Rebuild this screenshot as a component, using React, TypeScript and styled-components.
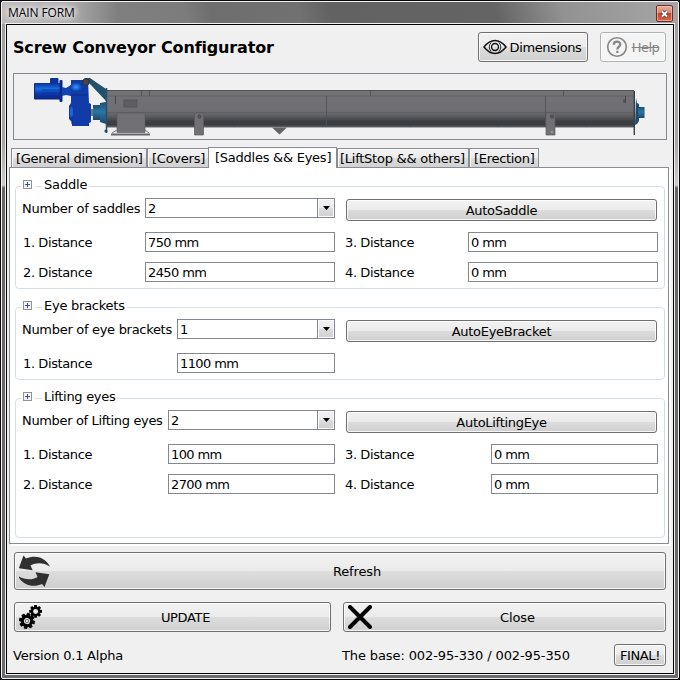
import React from 'react';
import styled, { createGlobalStyle, css } from 'styled-components';

const Global = createGlobalStyle`
  * { box-sizing: border-box; }
  html, body { margin: 0; padding: 0; }
  body {
    font-family: Verdana, "DejaVu Sans", sans-serif;
    font-size: 13px;
    line-height: 16px;
    color: #000;
    overflow: hidden;
  }
`;

const WindowEdge = styled.div`
  width: 680px;
  height: 680px;
  padding: 1px;
  background: #0a080a;
`;

const WindowFrame = styled.div`
  width: 678px;
  height: 678px;
  padding: 0 4px 4px;
  border: 1px solid #f4f2f3;
  border-radius: 2px;
  display: flex;
  flex-direction: column;
  background:
    linear-gradient(90deg, #bdbbbc 0, #b0aeaf 65px, rgba(140, 140, 140, 0) 115px) 0 0 / 100% 22px no-repeat,
    linear-gradient(75deg, #858585 0, #7c7c7c 180px, #6e6e6e 205px, #717171 290px, #626262 320px, #646464 480px, #929292 545px, #a6a6a6 100%) 0 0 / 100% 22px no-repeat,
    linear-gradient(180deg, #a09e9f 0, #a8a4a4 140px, #cfcaca 183px, #676566 186px, #6b6b6b 100%);
`;

const TitleBar = styled.div`
  height: 22px;
  flex: none;
  display: flex;
  justify-content: space-between;
  align-items: flex-start;
  padding: 0 1px 0 2px;
`;

const Caption = styled.span`
  font: 12px/21px "Open Sans", "Noto Sans", sans-serif;
  letter-spacing: -0.1px;
  text-shadow: 0 0 5px #fff, 0 0 7px #fff, 0 0 9px #eee;
`;

const CloseBox = styled.button`
  width: 17px;
  height: 17px;
  margin-top: 3px;
  padding: 0;
  display: flex;
  align-items: center;
  justify-content: center;
  border: 1px solid #6b2f28;
  border-radius: 2px;
  background: linear-gradient(#e9aa9a 0, #dd8673 45%, #c4452b 50%, #d9664a 100%);
  box-shadow: inset 0 0 0 1px rgba(255, 205, 190, 0.55);
`;

const Client = styled.main`
  flex: 1;
  display: flex;
  flex-direction: column;
  border: 1px solid #000;
  outline: 1px solid #f2f2f2;
  background: #f0f0f0;
  padding: 7px 6px 0;
`;

const Header = styled.header`
  height: 30px;
  display: flex;
  gap: 12px;
  padding-right: 1px;
`;

const Heading = styled.h1`
  flex: 1;
  margin: 0;
  font: bold 16px/31px Verdana, "DejaVu Sans", sans-serif;
  letter-spacing: -0.16px;
`;

const Push = styled.button<{ $w?: number; $h: number; $disabled?: boolean; $pad?: number; $ls?: number }>`
  ${p => (p.$w ? css`width: ${p.$w}px; flex: none;` : css`flex: 1;`)}
  height: ${p => p.$h}px;
  display: flex;
  align-items: center;
  padding: 0 ${p => p.$pad ?? 4}px;
  font: inherit;
  letter-spacing: ${p => p.$ls ?? -0.3}px;
  color: #000;
  white-space: nowrap;
  border: 1px solid #707070;
  border-radius: 3px;
  background: linear-gradient(#f2f2f2 0, #ebebeb 49%, #dddddd 50%, #cfcfcf 100%);
  box-shadow: inset 0 0 0 1px rgba(255, 255, 255, 0.8);
  ${p => p.$disabled && css`
    color: #838383;
    border-color: #adb2b5;
    background: #f4f4f4;
    text-decoration: line-through;
  `}
`;

const PushText = styled.span<{ $shift?: number }>`
  flex: 1;
  text-align: center;
  padding-top: 2px;
  padding-left: ${p => p.$shift ?? 0}px;
`;

const Glyph = styled.svg`
  display: block;
  flex: none;
`;

const Preview = styled.div`
  height: 67px;
  margin-top: 11px;
  border: 1px solid #828790;
`;

const TabStrip = styled.div`
  height: 20px;
  margin: 8px 0 -1px -3px;
  padding-left: 1px;
  display: flex;
  align-items: flex-end;
`;

const Tab = styled.div<{ $w: number; $active?: boolean; $ls?: number; $pad?: number }>`
  width: ${p => p.$w}px;
  flex: none;
  height: 20px;
  border: 1px solid #898c95;
  border-bottom: 0;
  padding-left: ${p => p.$pad ?? 4}px;
  line-height: 20px;
  white-space: nowrap;
  letter-spacing: ${p => p.$ls ?? -0.25}px;
  background: linear-gradient(#f2f2f2 0, #ebebeb 49%, #dddddd 50%, #d0d0d0 100%);
  box-shadow: inset 1px 1px 0 #fbfbfb;
  ${p => p.$active && css`
    height: 21px;
    margin-left: -1px;
    background: #fff;
    position: relative;
    z-index: 1;
  `}
`;

const TabPage = styled.section`
  width: 660px;
  height: 377px;
  margin-left: -4px;
  padding: 18px 3px 0 5px;
  border: 1px solid #898c95;
  background: #fff;
  box-shadow: 2px 2px 0 #fdfdfd;
`;

const Group = styled.section<{ $h: number }>`
  position: relative;
  height: ${p => p.$h}px;
  margin-bottom: 18px;
  padding: 11px 6px 0;
  border: 1px solid #d5dfe5;
  border-radius: 4px;
  display: grid;
  grid-template-columns: 313px 313px;
  column-gap: 10px;
  align-items: start;
  align-content: start;
`;

const Legend = styled.div`
  position: absolute;
  top: -10px;
  left: 5px;
  height: 16px;
  display: flex;
  align-items: center;
  background: #fff;
  padding: 0 2px;
`;

const Expander = styled.svg`
  display: block;
  margin: 0 2px 1px 0;
`;

const LegendDash = styled.span`
  width: 7px;
  height: 1px;
  margin: 3px 2px 0 1px;
  background: #d5dfe5;
`;

const LegendText = styled.span<{ $ls: number }>`
  letter-spacing: ${p => p.$ls}px;
`;

const Side = styled.div`
  display: flex;
  flex-direction: column;
  gap: 10px;
`;

const Row = styled.div<{ $first?: boolean }>`
  height: 20px;
  display: flex;
  align-items: center;
  margin-bottom: ${p => (p.$first ? 4 : 0)}px;
`;

const ActionRow = styled.div`
  height: 24px;
  padding: 1px 1px 0;
  display: flex;
`;

const Label = styled.label<{ $w: number; $ls?: number; $indent?: number }>`
  width: ${p => p.$w}px;
  flex: none;
  padding-top: 2px;
  padding-left: ${p => p.$indent ?? 0}px;
  letter-spacing: ${p => p.$ls ?? -0.4}px;
  white-space: nowrap;
`;

const Field = styled.div`
  flex: 1;
  height: 20px;
  padding-left: 2px;
  border: 1px solid #828790;
  background: #fff;
  line-height: 19px;
  letter-spacing: -0.6px;
  display: flex;
  justify-content: space-between;
`;

const DropButton = styled.span`
  width: 17px;
  border-left: 1px solid #828790;
  background: linear-gradient(#f2f2f2 0, #ebebeb 49%, #dddddd 50%, #cfcfcf 100%);
  box-shadow: inset 0 0 0 1px #fafafa;
  display: flex;
  align-items: center;
  justify-content: center;
`;

const Actions = styled.div<{ $top: number }>`
  display: flex;
  gap: 12px;
  margin: ${p => p.$top}px 1px 0;
`;

const Footer = styled.footer`
  display: flex;
  align-items: center;
  margin: 12px 1px 0 0;
`;

const Version = styled.span`
  width: 329px;
  padding-top: 2px;
  letter-spacing: -0.22px;
`;

const Base = styled.span`
  flex: 1;
  padding-top: 2px;
  letter-spacing: -0.11px;
`;

const Conveyor = () => (
  <Glyph width="652" height="65" viewBox="14 74 652 65">
    <defs>
      <linearGradient id="trough" x1="0" y1="0" x2="0" y2="1">
        <stop offset="0" stopColor="#727277" />
        <stop offset=".55" stopColor="#6e6e73" />
        <stop offset=".68" stopColor="#606165" />
        <stop offset=".84" stopColor="#3d3e42" />
        <stop offset=".93" stopColor="#3b3c40" />
        <stop offset="1" stopColor="#68686e" />
      </linearGradient>
      <linearGradient id="motor" x1="0" y1="0" x2="0" y2="1">
        <stop offset="0" stopColor="#0c2f9c" />
        <stop offset=".35" stopColor="#1670dc" />
        <stop offset=".6" stopColor="#0f3eb4" />
        <stop offset="1" stopColor="#0a2280" />
      </linearGradient>
      <linearGradient id="steel" x1="0" y1="0" x2="0" y2="1">
        <stop offset="0" stopColor="#1d4e70" />
        <stop offset=".45" stopColor="#2c75a8" />
        <stop offset="1" stopColor="#1c4766" />
      </linearGradient>
      <radialGradient id="shine">
        <stop offset="0" stopColor="#2e9dff" />
        <stop offset="1" stopColor="#103ba8" />
      </radialGradient>
    </defs>
    <rect x="50" y="78" width="8.5" height="6" rx="1" fill="#103298" />
    <rect x="34" y="83" width="27" height="16.5" rx="1" fill="url(#motor)" />
    <path d="M34.5 84v15" stroke="#0c267b" />
    <path d="M42 90h17M42 93h17M42 96h17" stroke="#0b2b91" strokeWidth=".7" />
    <rect x="59.5" y="80" width="3" height="22" rx="1" fill="#0c2986" />
    <path d="M62 87l4 1 5-3v11l-5-1-4 1z" fill="#1145b2" />
    <path d="M71 80h17l1 23 2 1v18l-2 1v3H72v-4l-3-3v-13l2-3z" fill="#103ba8" />
    <ellipse cx="76" cy="87" rx="6" ry="4.5" fill="url(#shine)" />
    <path d="M70 95h18M72 112v12" stroke="#0c2e8a" />
    <ellipse cx="71.5" cy="112" rx="1.5" ry="5" fill="#1b66df" />
    <path d="M84 78h6l16 11v12L90 84z" fill="#22506d" />
    <circle cx="86" cy="82" r="3.3" fill="#44474b" stroke="#2c3238" />
    <rect x="93" y="105" width="7" height="15" fill="url(#steel)" />
    <path d="M100 103l6-1v22l-6-2z" fill="url(#steel)" />
    <path d="M91 109h2v7h-2z" fill="#70777b" />
    <rect x="106" y="90" width="528" height="37.5" fill="url(#trough)" />
    <path d="M106 90.5h528" stroke="#4e4e55" />
    <path d="M107 96h526M107 112.5h526" stroke="#5d5d62" strokeWidth=".8" />
    <path d="M106.5 88v45" stroke="#2b506a" strokeWidth="1.5" />
    <circle cx="106" cy="131" r="1.6" fill="#264a65" />
    <path d="M115.5 96v8" stroke="#45454a" />
    <rect x="124" y="100" width="13" height="7" fill="#5f5f61" stroke="#505054" strokeWidth=".8" />
    <path d="M141.5 91v5M149.5 91v5M370.5 91v5M563.5 91v5M326.5 96v31M545.5 96v31" stroke="#515156" strokeWidth=".9" />
    <path d="M117 113h28v19.5h-28z" fill="#707075" stroke="#58585d" strokeWidth=".6" />
    <path d="M117 130l-5 3M145 130l4 3" stroke="#77777c" />
    <path d="M111 133.5h39v2h-39z" fill="#66666b" />
    <path d="M194.5 113h9v22h-9zM546 113h9v22h-9z" fill="#707075" stroke="#5a5a5f" strokeWidth=".7" />
    <g fill="#5b5b60" stroke="#404044" strokeWidth=".9">
      <circle cx="199.5" cy="116.5" r="1.6" />
      <circle cx="552" cy="116.5" r="1.6" />
    </g>
    <circle cx="552" cy="132" r="1" fill="#aaa" />
    <path d="M272 127.5h15l-7.5 7z" fill="#626267" />
    <path d="M234.5 120v7M322.5 120v7M410.5 120v7M498.5 120v7M586.5 120v7" stroke="#2b4660" strokeWidth=".7" />
    <path d="M625.5 96v7M624 103v-4" stroke="#424247" />
    <path d="M636 98l1 5 2 1v3h5.5v11H639v3l-2 3-2 1z" fill="#1c4b6e" />
    <rect x="638" y="107" width="6" height="11" fill="url(#steel)" />
    <path d="M634.3 91v44" stroke="#3d3e44" strokeWidth="1.4" />
  </Glyph>
);

const EyeIcon = () => (
  <Glyph width="24" height="16" viewBox="0 0 25 16" fill="none" stroke="#111">
    <path d="M1 8C5 3 8.5 1.2 12.5 1.2S20 3 24 8c-4 5-7.5 6.8-11.5 6.8S5 13 1 8z" strokeWidth="1.5" />
    <path d="M8.500 3.500a6 6 0 0 0 0 9M16.500 3.500a6 6 0 0 1 0 9" strokeWidth=".9" />
    <circle cx="12.5" cy="8" r="3.6" strokeWidth="1.4" />
  </Glyph>
);

const HelpIcon = () => (
  <Glyph width="22" height="22" viewBox="0 0 22 22" fill="none" stroke="#858585">
    <circle cx="11" cy="11" r="9.3" strokeWidth="1.6" />
    <path d="M7.8 8.7c0-4 6.5-3.9 6.500-.3 0 2.200-3 2.300-3 5" strokeWidth="2.2" />
    <path d="M11.3 14.800v2.200" strokeWidth="2.2" />
  </Glyph>
);

const RefreshIcon = () => (
  <Glyph width="32" height="33" viewBox="1 0 32 33" fill="#303030">
    <path d="M5.5 0.5 8 3.500C17 -.5 27 2 32 11.500 26 7.500 18 7 12.500 10.500l2.200 4.800L.8 13.200z" />
    <path d="M26.5 32 24 29C15 33 5 30.500 0 21c6 4 14 4.500 19.500 1l-2-4.800 13.800 2.100z" />
  </Glyph>
);

const teeth = [0, 45, 90, 135, 180, 225, 270, 315];
const Gear = ({ x, y, r, turn }: { x: number; y: number; r: number; turn: number }) => (
  <g transform={`translate(${x} ${y}) rotate(${turn}) scale(${r / 8})`}>
    <circle r="4.5" fill="none" stroke="#000" strokeWidth="2.8" />
    {teeth.map(a => (
      <path key={a} d="M-1.600 -8h3.200l.5 3h-4.200z" transform={`rotate(${a})`} />
    ))}
  </g>
);

const GearsIcon = () => (
  <Glyph width="23" height="24" viewBox="0 0 23 24">
    <Gear x={8} y={16} r={8} turn={12} />
    <circle cx="8" cy="16" r="1.7" fill="none" stroke="#555" strokeWidth=".7" />
    <Gear x={16.6} y={6.4} r={6.4} turn={0} />
  </Glyph>
);

const CrossIcon = () => (
  <Glyph width="24" height="24" viewBox="0 0 24 24">
    <path d="M2 2l20 20M22 2L2 22" stroke="#000" strokeWidth="4" strokeLinecap="round" />
  </Glyph>
);

const PlusBox = () => (
  <Expander width="9" height="9" viewBox="0 0 9 9">
    <rect x=".5" y=".5" width="8" height="8" fill="#f4f4f4" stroke="#919191" />
    <path d="M2 4.5h5M4.5 2v5" stroke="#3b4f9b" />
  </Expander>
);

type GroupProps = {
  title: string;
  titleSpacing: number;
  h: number;
  countLabel: string;
  countSpacing: number;
  count: string;
  labelWidth: number;
  action: string;
  values: string[];
};

const DistanceRow = ({ n, w, value }: { n: number; w: number; value: string }) => (
  <Row>
    <Label $w={w} $indent={n < 3 ? 1 : 0}>{n}. Distance</Label>
    <Field>{value}</Field>
  </Row>
);

const DistanceGroup = ({ title, titleSpacing, h, countLabel, countSpacing, count, labelWidth, action, values }: GroupProps) => (
  <Group $h={h}>
    <Legend>
      <PlusBox />
      <LegendDash />
      <LegendText $ls={titleSpacing}>{title}</LegendText>
    </Legend>
    <Side>
      <Row $first>
        <Label $w={labelWidth} $ls={countSpacing}>{countLabel}</Label>
        <Field>
          {count}
          <DropButton>
            <svg width="7" height="4" viewBox="0 0 7 4"><path d="M0 0h7L3.5 4z" /></svg>
          </DropButton>
        </Field>
      </Row>
      {values.slice(0, 2).map((v, i) => <DistanceRow key={i} n={i + 1} w={labelWidth} value={v} />)}
    </Side>
    <Side>
      <ActionRow>
        <Push $h={22}><PushText>{action}</PushText></Push>
      </ActionRow>
      {values.slice(2).map((v, i) => <DistanceRow key={i} n={i + 3} w={labelWidth} value={v} />)}
    </Side>
  </Group>
);

export default function App() {
  return (
    <>
      <Global />
      <WindowEdge>
        <WindowFrame>
          <TitleBar>
            <Caption>MAIN FORM</Caption>
            <CloseBox aria-label="Close window">
              <svg width="9" height="8" viewBox="0 0 9 8">
                <path d="M2 1.5l5 5M7 1.5l-5 5" stroke="#4d3b42" strokeWidth="3.4" />
                <path d="M2 1.5l5 5M7 1.5l-5 5" stroke="#fff" strokeWidth="1.8" />
              </svg>
            </CloseBox>
          </TitleBar>
          <Client>
            <Header>
              <Heading>Screw Conveyor Configurator</Heading>
              <Push $w={110} $h={30} $ls={-0.4}><EyeIcon /><PushText $shift={1}>Dimensions</PushText></Push>
              <Push $w={66} $h={30} $disabled $pad={5} $ls={-0.5}><HelpIcon /><PushText $shift={3}>Help</PushText></Push>
            </Header>
            <Preview><Conveyor /></Preview>
            <TabStrip>
              <Tab $w={136} $ls={-0.33}>[General dimension]</Tab>
              <Tab $w={62}>[Covers]</Tab>
              <Tab $w={129} $active $pad={6}>[Saddles &amp;&amp; Eyes]</Tab>
              <Tab $w={132} $pad={2}>[LiftStop &amp;&amp; others]</Tab>
              <Tab $w={70} $ls={-0.3}>[Erection]</Tab>
            </TabStrip>
            <TabPage>
              <DistanceGroup title="Saddle" titleSpacing={-0.15} h={103} countLabel="Number of saddles" countSpacing={-0.26}
                count="2" labelWidth={123} action="AutoSaddle" values={['750 mm', '2450 mm', '0 mm', '0 mm']} />
              <DistanceGroup title="Eye brackets" titleSpacing={-0.25} h={73} countLabel="Number of eye brackets" countSpacing={-0.3}
                count="1" labelWidth={155} action="AutoEyeBracket" values={['1100 mm']} />
              <DistanceGroup title="Lifting eyes" titleSpacing={-0.3} h={140} countLabel="Number of Lifting eyes" countSpacing={-0.34}
                count="2" labelWidth={146} action="AutoLiftingEye" values={['100 mm', '2700 mm', '0 mm', '0 mm']} />
            </TabPage>
            <Actions $top={8}>
              <Push $h={38} $ls={-0.15}><RefreshIcon /><PushText $shift={2}>Refresh</PushText></Push>
            </Actions>
            <Actions $top={12}>
              <Push $w={317} $h={30} $ls={-0.35}><GearsIcon /><PushText $shift={3}>UPDATE</PushText></Push>
              <Push $h={30} $ls={-0.1}><CrossIcon /><PushText $shift={2}>Close</PushText></Push>
            </Actions>
            <Footer>
              <Version>Version 0.1 Alpha</Version>
              <Base>The base: 002-95-330 / 002-95-350</Base>
              <Push $w={52} $h={22} $pad={0} $ls={-0.4}><PushText>FINAL!</PushText></Push>
            </Footer>
          </Client>
        </WindowFrame>
      </WindowEdge>
    </>
  );
}
